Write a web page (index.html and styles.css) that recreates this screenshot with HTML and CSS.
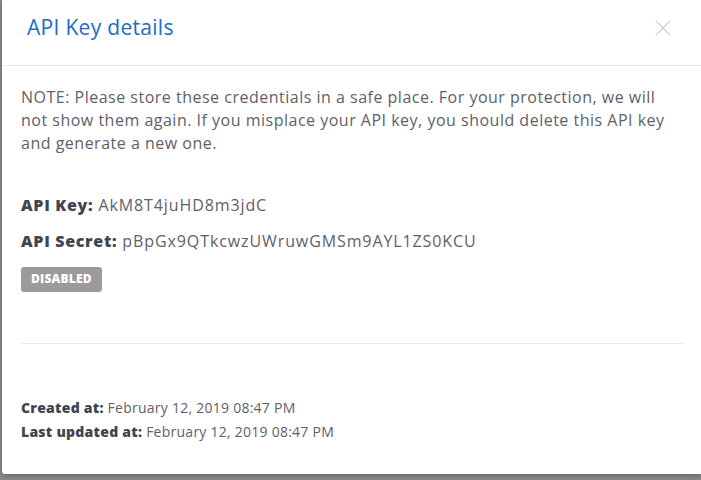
FILE: index.html
```html
<!DOCTYPE html>
<html>
<head>
<meta charset="utf-8">
<link rel="stylesheet" href="styles.css">
</head>
<body>
<div class="backdrop">
  <div class="modal">
    <div class="modal-header">
      <h1 class="modal-title">API Key details</h1>
      <button class="close" aria-label="Close">
        <svg width="16" height="16" viewBox="0 0 16 16"><path d="M1 1L15 15M15 1L1 15" stroke="#cfcfcf" stroke-width="1.2" fill="none"/></svg>
      </button>
    </div>
    <div class="modal-body">
      <p class="note">NOTE: Please store these credentials in a safe place. For your protection, we will not show them again. If you misplace your API key, you should delete this API key and generate a new one.</p>
      <p class="field"><b>API Key:</b> AkM8T4juHD8m3jdC</p>
      <p class="field"><b>API Secret:</b> pBpGx9QTkcwzUWruwGMSm9AYL1ZS0KCU</p>
      <span class="badge">DISABLED</span>
      <hr class="divider">
      <div class="meta">
        <p><b>Created at:</b> February 12, 2019 08:47 PM</p>
        <p><b>Last updated at:</b> February 12, 2019 08:47 PM</p>
      </div>
    </div>
  </div>
</div>
</body>
</html>
```
FILE: styles.css
```css
html, body {
  margin: 0;
  padding: 0;
  height: 100%;
}
body {
  background: #8c8c8c;
  font-family: "Open Sans", "Liberation Sans", sans-serif;
  overflow: hidden;
}
.backdrop {
  padding-left: 2px;
}
.modal {
  background: #fff;
  height: 474px;
  box-sizing: border-box;
  box-shadow: 0 2px 6px rgba(0,0,0,0.3);
  border-radius: 0 0 0 3px;
}
.modal-header {
  height: 66px;
  box-sizing: border-box;
  border-bottom: 1px solid #e9e9e9;
  display: flex;
  align-items: flex-start;
  justify-content: space-between;
  padding: 13px 30px 0 25px;
}
.modal-title {
  margin: 0;
  font-size: 21px;
  line-height: 29px;
  font-weight: 400;
  letter-spacing: 0.3px;
  color: #1b6ec2;
}
.close {
  border: 0;
  background: none;
  padding: 0;
  margin-top: 7px;
  width: 16px;
  height: 16px;
  display: flex;
}
.modal-body {
  padding: 20px 17px 0 19px;
  color: #5e6169;
  letter-spacing: 0.5px;
}
.note {
  margin: 0;
  font-size: 16px;
  line-height: 23px;
}
.field {
  margin: 0;
  font-size: 16px;
  line-height: 23px;
  letter-spacing: 0.9px;
}
.note + .field {
  margin-top: 39px;
}
.field + .field {
  margin-top: 13px;
}
.field b {
  color: #3f4451;
  font-weight: 800;
  letter-spacing: 0.7px;
}
.badge {
  display: inline-block;
  margin-top: 14px;
  background: #9b9b9b;
  color: #fff;
  font-size: 12px;
  font-weight: 800;
  letter-spacing: 0.2px;
  padding: 6px 10px 7px;
  border-radius: 3px;
  line-height: 12px;
}
.divider {
  margin: 51px 0 0;
  border: 0;
  border-top: 1px solid #ececec;
}
.meta {
  margin-top: 52px;
  font-size: 14px;
  line-height: 24px;
  letter-spacing: 0.25px;
}
.meta p {
  margin: 0;
}
.meta b {
  color: #3f4451;
  font-weight: 800;
}
```
